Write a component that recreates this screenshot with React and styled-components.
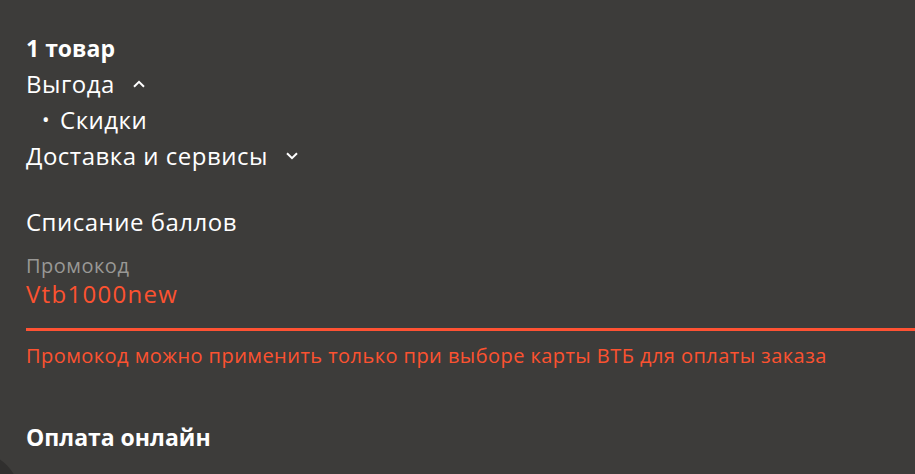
import React from "react";
import styled, { createGlobalStyle } from "styled-components";

const Global = createGlobalStyle`
  html, body {
    margin: 0;
    padding: 0;
    background: #3d3c3a;
  }
  body {
    font-family: "Open Sans", "Noto Sans", sans-serif;
    color: #ffffff;
  }
`;

const Page = styled.div`
  position: relative;
  width: 915px;
  height: 474px;
  overflow: hidden;
  background: #3d3c3a;
  padding: 30px 0 0 26px;
  box-sizing: border-box;
  &::after {
    content: "";
    position: absolute;
    left: -70px;
    bottom: -68px;
    width: 90px;
    height: 90px;
    border-radius: 50%;
    background: #302f2e;
  }
`;

const Title = styled.div`
  font-size: 23px;
  line-height: 36px;
  font-weight: 700;
`;

const Row = styled.div`
  display: flex;
  align-items: center;
  font-size: 24px;
  line-height: 36px;
  letter-spacing: 0.5px;
  padding-left: ${(p) => (p.$indent ? "16px" : "0")};
`;

const Bullet = styled.span`
  font-size: 20px;
  margin-right: 10px;
`;

const Chevron = styled.svg`
  margin-left: 18px;
  width: 12px;
  height: 8px;
`;

const Section = styled.div`
  margin-top: 30px;
  font-size: 24px;
  line-height: 36px;
  letter-spacing: 0.5px;
`;

const Field = styled.div`
  margin-top: 14px;
  padding-bottom: 18px;
  border-bottom: 3px solid #ff5233;
`;

const Label = styled.div`
  font-size: 20px;
  line-height: 24px;
  letter-spacing: 0.5px;
  color: #999895;
`;

const Value = styled.div`
  font-size: 24px;
  line-height: 32px;
  letter-spacing: 1.3px;
  color: #fc5230;
`;

const Error = styled.div`
  margin-top: 13px;
  font-size: 20px;
  line-height: 24px;
  letter-spacing: 0.45px;
  color: #fc5230;
`;

const Payment = styled.div`
  margin-top: 51px;
  font-size: 23px;
  line-height: 36px;
  font-weight: 700;
`;

function Arrow({ up }) {
  return (
    <Chevron viewBox="0 0 12 8" fill="none">
      <path
        d={up ? "M1 6.8 L6 1.8 L11 6.8" : "M1 1.2 L6 6.2 L11 1.2"}
        stroke="#fff"
        strokeWidth="2"
      />
    </Chevron>
  );
}

export default function App() {
  return (
    <>
      <Global />
      <Page>
        <Title>1 товар</Title>
        <Row>
          Выгода
          <Arrow up />
        </Row>
        <Row $indent>
          <Bullet>•</Bullet>Скидки
        </Row>
        <Row>
          Доставка и сервисы
          <Arrow />
        </Row>
        <Section>Списание баллов</Section>
        <Field>
          <Label>Промокод</Label>
          <Value>Vtb1000new</Value>
        </Field>
        <Error>Промокод можно применить только при выборе карты ВТБ для оплаты заказа</Error>
        <Payment>Оплата онлайн</Payment>
      </Page>
    </>
  );
}
